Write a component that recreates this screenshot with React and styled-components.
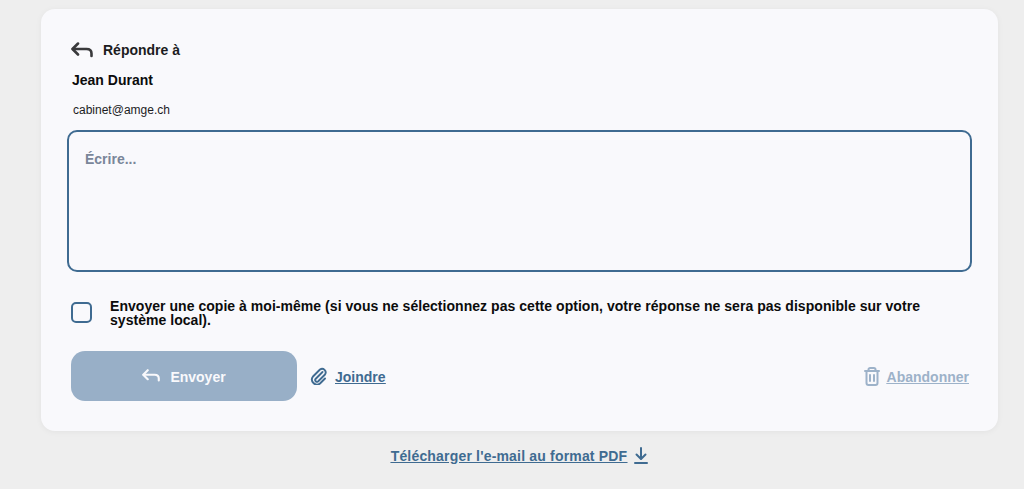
import React from "react";
import styled, { createGlobalStyle } from "styled-components";

const GlobalStyle = createGlobalStyle`
  html, body {
    margin: 0;
    background: #eeeeee;
    font-family: "Liberation Sans", Arial, sans-serif;
  }
`;

const ReplyIcon = ({ size = 22, strokeWidth = 2.6 }) => (
  <svg width={size} height={size * 0.73} viewBox="0 0 22 16" fill="none" stroke="currentColor" strokeWidth={strokeWidth} strokeLinecap="round" strokeLinejoin="round">
    <path d="M7 1.5 1.5 7l5.5 5.5" />
    <path d="M2 7h13.5c3 0 5 1.6 5 4.6V14" />
  </svg>
);

const ClipIcon = () => (
  <svg width="18" height="18" viewBox="0 0 18 18" fill="none" stroke="currentColor" strokeWidth="1.9" strokeLinecap="round" strokeLinejoin="round">
    <path d="M12.5 5 5.5 12a1.8 1.8 0 0 0 2.5 2.5L15 7.5a3.6 3.6 0 0 0-5-5L3 9.5a5 5 0 0 0 7 7l5-5" />
  </svg>
);

const TrashIcon = () => (
  <svg width="16" height="19" viewBox="0 0 16 19" fill="none" stroke="currentColor" strokeWidth="2" strokeLinecap="round" strokeLinejoin="round">
    <path d="M1 4h14" />
    <path d="M4.5 4V2.6c0-.9.7-1.6 1.6-1.6h3.8c.9 0 1.6.7 1.6 1.6V4" />
    <path d="M2.5 4v12c0 1.2.8 2 2 2h7c1.2 0 2-.8 2-2V4" />
    <path d="M6 8v6M10 8v6" />
  </svg>
);

const DownloadIcon = () => (
  <svg width="14" height="17" viewBox="0 0 14 17" fill="none" stroke="currentColor" strokeWidth="2" strokeLinecap="round" strokeLinejoin="round">
    <path d="M7 1v10.5" />
    <path d="M2.5 7.5 7 12l4.5-4.5" />
    <path d="M1 16h12" />
  </svg>
);

export default function App() {
  return (
    <>
      <GlobalStyle />
      <Page>
        <Card>
          <ReplyHeading>
            <ReplyIcon />
            <span>Répondre à</span>
          </ReplyHeading>
          <Name>Jean Durant</Name>
          <Email>cabinet@amge.ch</Email>
          <Editor placeholder="Écrire..." />
          <CopyRow>
            <Checkbox type="checkbox" />
            <CopyLabel>
              Envoyer une copie à moi-même (si vous ne sélectionnez pas cette option, votre réponse ne sera pas disponible sur votre système local).
            </CopyLabel>
          </CopyRow>
          <Actions>
            <SendButton type="button">
              <ReplyIcon size={18} strokeWidth={2.6} />
              <ActionText>Envoyer</ActionText>
            </SendButton>
            <ActionLink href="#">
              <ClipIcon />
              <ActionText as="u">Joindre</ActionText>
            </ActionLink>
            <ActionLink href="#" $muted>
              <TrashIcon />
              <ActionText as="u">Abandonner</ActionText>
            </ActionLink>
          </Actions>
        </Card>
        <PdfLink href="#">
          <u>Télécharger l'e-mail au format PDF</u>
          <DownloadIcon />
        </PdfLink>
      </Page>
    </>
  );
}

const Page = styled.div`
  height: 489px;
  box-sizing: border-box;
  padding: 9px 26px 0 41px;
  overflow: hidden;
  display: flex;
  flex-direction: column;
`;

const Card = styled.div`
  height: 422px;
  box-sizing: border-box;
  padding: 32px 26px 0 26px;
  background: #f9f9fc;
  border-radius: 14px;
  box-shadow: 0 1px 6px rgba(0, 0, 0, 0.05);
`;

const ReplyHeading = styled.div`
  display: flex;
  align-items: center;
  gap: 10px;
  height: 18px;
  padding-left: 4px;
  font-size: 14px;
  font-weight: 700;
  color: #1c1c1e;

  svg {
    color: #3a3a3c;
  }
`;

const Name = styled.div`
  margin-top: 12px;
  padding-left: 5px;
  font-size: 14px;
  line-height: 18px;
  font-weight: 700;
  color: #0c0c0c;
`;

const Email = styled.div`
  margin-top: 12px;
  padding-left: 6px;
  font-size: 12px;
  line-height: 18px;
  color: #1c1c1e;
`;

const Editor = styled.textarea`
  display: block;
  width: 100%;
  height: 142px;
  box-sizing: border-box;
  margin-top: 11px;
  padding: 19px 16px;
  background: transparent;
  border: 2px solid #3f6b91;
  border-radius: 10px;
  outline: none;
  resize: none;
  font-family: "Liberation Sans", Arial, sans-serif;
  font-size: 14px;
  font-weight: 700;

  &::placeholder {
    color: #7a8699;
    opacity: 1;
  }
`;

const CopyRow = styled.label`
  display: flex;
  align-items: flex-start;
  gap: 18px;
  margin-top: 26px;
  padding: 0 40px 0 4px;
`;

const Checkbox = styled.input`
  appearance: none;
  flex: none;
  width: 21px;
  height: 21px;
  margin: 4px 0 0;
  border: 2px solid #3f6b91;
  border-radius: 5px;
  background: transparent;
`;

const CopyLabel = styled.span`
  font-size: 14px;
  line-height: 14px;
  font-weight: 700;
  letter-spacing: 0.04px;
  color: #0c0c0c;
  margin-top: 1px;
`;

const Actions = styled.div`
  display: flex;
  align-items: center;
  gap: 13px;
  margin-top: 24px;
  padding: 0 3px 0 4px;

  a:last-child {
    margin-left: auto;
  }
`;

const ActionText = styled.span`
  margin-top: 2px;
`;

const SendButton = styled.button`
  display: flex;
  align-items: center;
  justify-content: center;
  gap: 10px;
  width: 226px;
  height: 50px;
  border: 0;
  border-radius: 14px;
  background: #98afc7;
  color: #f9f9fc;
  font-family: "Liberation Sans", Arial, sans-serif;
  font-size: 14px;
  font-weight: 700;
`;

const ActionLink = styled.a`
  display: flex;
  align-items: center;
  gap: 7px;
  font-size: 14px;
  font-weight: 700;
  color: ${(p) => (p.$muted ? "#9db2c9" : "#3f6b91")};
`;

const PdfLink = styled.a`
  display: flex;
  align-items: center;
  justify-content: center;
  gap: 7px;
  margin-top: 16px;
  font-size: 14px;
  font-weight: 700;
  letter-spacing: 0.18px;
  color: #3f6b91;
`;
